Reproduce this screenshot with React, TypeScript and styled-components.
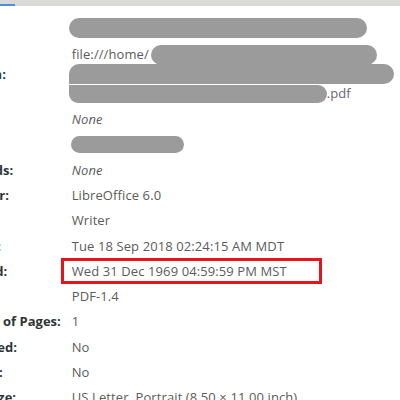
import React from 'react';
import styled, { createGlobalStyle } from 'styled-components';

const Global = createGlobalStyle`
  html, body { margin: 0; padding: 0; background: #ffffff; }
  body {
    width: 400px;
    height: 400px;
    overflow: hidden;
    font-family: "Open Sans", "Noto Sans", sans-serif;
  }
`;

const Header = styled.div`
  height: 6px;
  background: #d9d9d7;
  display: flex;
  align-items: flex-end;
`;

const TabIndicator = styled.div`
  width: 15px;
  height: 2px;
  background: #4a90d9;
`;

const Grid = styled.div`
  display: grid;
  grid-template-columns: max-content 1fr;
  column-gap: 11px;
  row-gap: 6.8px;
  margin-left: -54px;
  padding-top: 12px;
  font-size: 13px;
  line-height: 18.5px;
`;

const Label = styled.div`
  align-self: center;
  font-weight: 700;
  color: #2e3436;
  white-space: nowrap;
`;

const Value = styled.div<{ $italic?: boolean }>`
  display: flex;
  align-items: center;
  min-height: 18.5px;
  color: #5b5b5b;
  letter-spacing: 0.1px;
  white-space: nowrap;
  font-style: ${(p) => (p.$italic ? 'italic' : 'normal')};
`;

const Lines = styled.div`
  display: flex;
  flex-direction: column;
  color: #5b5b5b;
  letter-spacing: 0.1px;
  white-space: nowrap;
`;

const Line = styled.div`
  display: flex;
  align-items: center;
  height: 19.5px;
`;

const Redact = styled.span<{ $w: number; $h: number; $radius?: string; $shift?: number }>`
  display: inline-block;
  width: ${(p) => p.$w}px;
  height: ${(p) => p.$h}px;
  margin-left: ${(p) => p.$shift ?? 0}px;
  background: #9b9b9b;
  border-radius: ${(p) => p.$radius ?? '10px'};
`;

const Pdf = styled.span`
  color: #6a6470;
`;

const Boxed = styled.span`
  display: inline-block;
  border: 3px solid #e8141c;
  padding: 1px 32px 1px 8px;
  margin: -4px 0 -4px -11px;
`;

type Row = { label: string; value: React.ReactNode; italic?: boolean };

const rows: Row[] = [
  { label: 'Subject:', value: 'None', italic: true },
  { label: 'Author:', value: <Redact $w={113} $h={17} $shift={-1} /> },
  { label: 'Keywords:', value: 'None', italic: true },
  { label: 'Producer:', value: 'LibreOffice 6.0' },
  { label: 'Creator:', value: 'Writer' },
  { label: 'Created:', value: 'Tue 18 Sep 2018 02:24:15 AM MDT' },
  { label: 'Modified:', value: <Boxed>Wed 31 Dec 1969 04:59:59 PM MST</Boxed> },
  { label: 'Format:', value: 'PDF-1.4' },
  { label: 'Number of Pages:', value: '1' },
  { label: 'Optimized:', value: 'No' },
  { label: 'Security:', value: 'No' },
  { label: 'Paper Size:', value: 'US Letter, Portrait (8.50 × 11.00 inch)' },
];

export default function App() {
  return (
    <>
      <Global />
      <Header>
        <TabIndicator />
      </Header>
      <Grid>
        <Label>Title:</Label>
        <Value>
          <Redact $w={298} $h={20} $shift={-3} />
        </Value>
        <Label>Location:</Label>
        <Lines>
          <Line>
            file:///home/
            <Redact $w={226} $h={20} $shift={2} />
          </Line>
          <Line>
            <Redact $w={325} $h={20} $shift={-3} $radius="10px 10px 10px 0" />
          </Line>
          <Line>
            <Redact $w={258} $h={18} $shift={-3} $radius="0 10px 10px 10px" />
            <Pdf>.pdf</Pdf>
          </Line>
        </Lines>
        {rows.map((r) => (
          <React.Fragment key={r.label}>
            <Label>{r.label}</Label>
            <Value $italic={r.italic}>{r.value}</Value>
          </React.Fragment>
        ))}
      </Grid>
    </>
  );
}
